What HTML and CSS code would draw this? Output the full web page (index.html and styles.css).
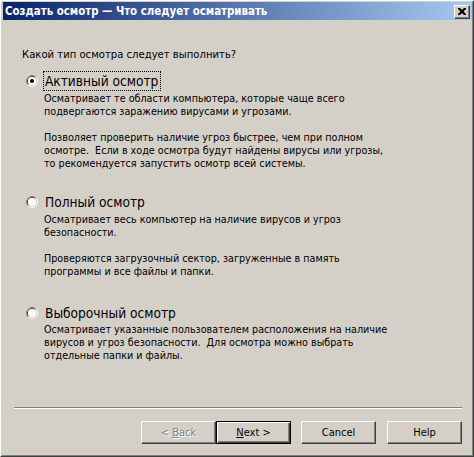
FILE: index.html
```html
<!DOCTYPE html>
<html lang="ru">
<head>
<meta charset="utf-8">
<title>Создать осмотр</title>
<link rel="stylesheet" href="styles.css">
</head>
<body>
<div class="window">
  <div class="frame">
    <div class="titlebar">
      <span class="title">Создать осмотр — Что следует осматривать</span>
      <span class="close">
        <svg width="8" height="7" viewBox="0 0 8 7"><path d="M0 0h2l2 2 2-2h2v1L5.5 3.5 8 6v1H6L4 5 2 7H0V6l2.5-2.5L0 1z" fill="#000"/></svg>
      </span>
    </div>
    <div class="main">
      <div class="question">Какой тип осмотра следует выполнить?</div>

      <div class="option option-first">
        <div class="option-head">
          <span class="radio">
            <svg width="12" height="12" viewBox="0 0 12 12">
              <path d="M2.11 9.89A5.5 5.5 0 0 1 9.89 2.11" fill="none" stroke="#808080"/>
              <path d="M9.89 2.11A5.5 5.5 0 0 1 2.11 9.89" fill="none" stroke="#fff"/>
              <path d="M2.82 9.18A4.5 4.5 0 0 1 9.18 2.82" fill="none" stroke="#404040"/>
              <path d="M9.18 2.82A4.5 4.5 0 0 1 2.82 9.18" fill="none" stroke="#d4d0c8"/>
              <circle cx="6" cy="6" r="4" fill="#fff"/>
              <circle cx="6" cy="6" r="2" fill="#000"/>
            </svg>
          </span>
          <span class="label label-focus">Активный осмотр</span>
        </div>
        <div class="desc">
          <p>Осматривает те области компьютера, которые чаще всего<br>подвергаются заражению вирусами и угрозами.</p>
          <p>Позволяет проверить наличие угроз быстрее, чем при полном<br>осмотре.&nbsp; Если в ходе осмотра будут найдены вирусы или угрозы,<br>то рекомендуется запустить осмотр всей системы.</p>
        </div>
      </div>

      <div class="option option-second">
        <div class="option-head">
          <span class="radio">
            <svg width="12" height="12" viewBox="0 0 12 12">
              <path d="M2.11 9.89A5.5 5.5 0 0 1 9.89 2.11" fill="none" stroke="#808080"/>
              <path d="M9.89 2.11A5.5 5.5 0 0 1 2.11 9.89" fill="none" stroke="#fff"/>
              <path d="M2.82 9.18A4.5 4.5 0 0 1 9.18 2.82" fill="none" stroke="#404040"/>
              <path d="M9.18 2.82A4.5 4.5 0 0 1 2.82 9.18" fill="none" stroke="#d4d0c8"/>
              <circle cx="6" cy="6" r="4" fill="#fff"/>
            </svg>
          </span>
          <span class="label">Полный осмотр</span>
        </div>
        <div class="desc">
          <p>Осматривает весь компьютер на наличие вирусов и угроз<br>безопасности.</p>
          <p>Проверяются загрузочный сектор, загруженные в память<br>программы и все файлы и папки.</p>
        </div>
      </div>

      <div class="option option-third">
        <div class="option-head">
          <span class="radio">
            <svg width="12" height="12" viewBox="0 0 12 12">
              <path d="M2.11 9.89A5.5 5.5 0 0 1 9.89 2.11" fill="none" stroke="#808080"/>
              <path d="M9.89 2.11A5.5 5.5 0 0 1 2.11 9.89" fill="none" stroke="#fff"/>
              <path d="M2.82 9.18A4.5 4.5 0 0 1 9.18 2.82" fill="none" stroke="#404040"/>
              <path d="M9.18 2.82A4.5 4.5 0 0 1 2.82 9.18" fill="none" stroke="#d4d0c8"/>
              <circle cx="6" cy="6" r="4" fill="#fff"/>
            </svg>
          </span>
          <span class="label">Выборочный осмотр</span>
        </div>
        <div class="desc desc-tight">
          <p>Осматривает указанные пользователем расположения на наличие<br>вирусов и угроз безопасности.&nbsp; Для осмотра можно выбрать<br>отдельные папки и файлы.</p>
        </div>
      </div>
    </div>
    <div class="separator"></div>
    <div class="buttons">
      <button class="btn btn-disabled" type="button">&lt; <u>B</u>ack</button>
      <button class="btn btn-default" type="button"><u>N</u>ext &gt;</button>
      <button class="btn btn-cancel" type="button">Cancel</button>
      <button class="btn btn-help" type="button">Help</button>
    </div>
  </div>
</div>
</body>
</html>
```

FILE: styles.css
```css
html, body {
  margin: 0;
  padding: 0;
  background: #d4d0c8;
}

body {
  font-family: "DejaVu Sans Condensed", "Liberation Sans", sans-serif;
  font-size: 10.7px;
  color: #000;
}

.window {
  width: 474px;
  height: 457px;
  box-sizing: border-box;
  border: 1px solid;
  border-color: #fff #404040 #404040 #fff;
  background: #d4d0c8;
}

.frame {
  height: 100%;
  box-sizing: border-box;
  border: 1px solid;
  border-color: #d4d0c8 #808080 #808080 #d4d0c8;
  padding: 0 0 0 1px;
  display: flex;
  flex-direction: column;
}

.titlebar {
  height: 18px;
  flex: none;
  display: flex;
  align-items: center;
  justify-content: space-between;
  background: linear-gradient(to right, #0a246a, #a6caf0);
  padding-left: 2px;
}

.title {
  color: #fff;
  font-weight: bold;
  font-size: 11.4px;
  line-height: 18px;
  white-space: nowrap;
}

.close {
  width: 16px;
  height: 14px;
  box-sizing: border-box;
  margin-right: 2px;
  margin-top: 1px;
  background: #d4d0c8;
  border: 1px solid;
  border-color: #fff #404040 #404040 #fff;
  box-shadow: inset -1px -1px #808080;
  display: flex;
  align-items: center;
  justify-content: center;
  padding: 0 1px 1px 0;
}

.close svg { display: block; }

.main {
  flex: 1;
  padding: 28px 0 0 19px;
}

.question {
  line-height: 13px;
  font-size: 11.2px;
}

.option-head {
  display: flex;
  align-items: center;
  padding-left: 4px;
  gap: 5px;
}

.radio {
  width: 12px;
  height: 12px;
  flex: none;
}

.radio svg { display: block; }

.label {
  font-size: 13.6px;
  line-height: 18px;
  border: 1px dotted transparent;
  padding: 0 2px 0 1px;
  white-space: nowrap;
}

.label-focus {
  border-color: #000;
}

.desc {
  padding-left: 22px;
  line-height: 13px;
  margin-top: 1px;
}

.desc-tight {
  margin-top: 0;
}

.desc p {
  margin: 0 0 13px;
  white-space: nowrap;
}

.desc p:last-child {
  margin-bottom: 0;
}

.option-first { margin-top: 10px; }
.option-second { margin-top: 22px; }
.option-third { margin-top: 25px; }

.separator {
  flex: none;
  margin: 0 10px 0 11px;
  border-top: 1px solid #808080;
  border-bottom: 1px solid #fff;
}

.buttons {
  flex: none;
  display: flex;
  justify-content: flex-end;
  padding: 12px 10px 11px 0;
}

.btn {
  appearance: none;
  width: 75px;
  height: 23px;
  box-sizing: border-box;
  margin: 0;
  padding: 0;
  background: #d4d0c8;
  border: 1px solid;
  border-color: #fff #404040 #404040 #fff;
  box-shadow: inset -1px -1px #808080;
  font-family: inherit;
  font-size: 11px;
  color: #000;
}

.btn-default {
  border: 1px solid #000;
  box-shadow: inset 1px 1px #fff, inset -1px -1px #404040, inset -2px -2px #808080;
}

.btn-disabled {
  color: #808080;
  text-shadow: 1px 1px #fff;
}

.btn-cancel { margin-left: 10px; }
.btn-help { margin-left: 11px; }
```
